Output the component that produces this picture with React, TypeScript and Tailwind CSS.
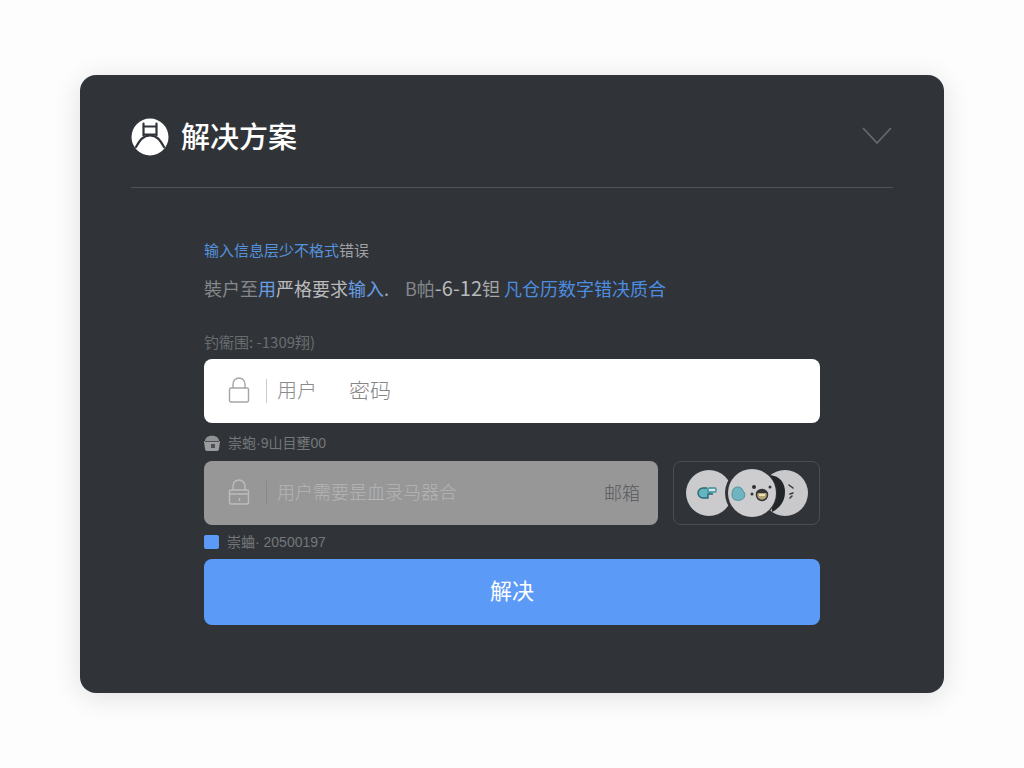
import React, { useState } from 'react';

const LogoMark: React.FC = () => (
  <svg className="w-[38px] h-[38px] shrink-0" viewBox="0 0 38 38" aria-hidden="true">
    <circle cx="19" cy="19" r="18.5" fill="#ffffff" />
    <g fill="none" stroke="#303438" strokeWidth="2.2" strokeLinecap="round" strokeLinejoin="round">
      <path d="M12.5 5.500v12M25.500 5.500v12M12.500 8.500h13M12.500 16.500h13" />
      <path d="M5 29C9 22 12 17.500 19 17.500S29 22 33 29" />
    </g>
  </svg>
);

const LockIcon: React.FC<{ className: string; keyhole?: boolean }> = ({ className, keyhole = false }) => (
  <svg
    className={`w-[22px] h-7 shrink-0 ${className}`}
    viewBox="0 0 22 28"
    fill="none"
    stroke="currentColor"
    strokeWidth="1.4"
    strokeLinejoin="round"
    aria-hidden="true"
  >
    <rect x="1.500" y="11" width="19" height="14" rx="1.500" />
    <path d="M5 11V7a6 6 0 0 1 12 0v4" />
    {keyhole && <path d="M2 15h18M11.500 19v3" />}
  </svg>
);

const CaptchaFaces: React.FC = () => (
  <svg className="w-[124px] h-[50px] shrink-0" viewBox="0 0 124 50" aria-hidden="true">
    <circle cx="100" cy="25" r="23" fill="#c9c9cb" />
    <path d="M85 7c10 1 15 8 15 17s-5 16-13 20z" fill="#222628" />
    <g stroke="#34383a" strokeWidth="1.500" strokeLinecap="round">
      <path d="M104 17l4 3M108 25l-3 1M105 30l2-2" />
    </g>

    <circle cx="24" cy="25" r="23" fill="#cbcbcd" />
    <path d="M22 20h-4a5 5 0 0 0 0 10h5v-4h5" fill="#63b6c1" stroke="#2e6871" strokeWidth="1.400" />
    <rect x="23" y="20" width="8" height="4" rx="1" fill="#d7e5e7" stroke="#3b8f9b" strokeWidth="1.400" />

    <circle cx="66" cy="25" r="26" fill="#303438" />
    <circle cx="67" cy="25" r="24" fill="#cdcdcf" />
    <path
      d="M48 22c1-3 5-4 8-2 2 1 1 3 3 4 2 3 0 8-4 8-5 1-8-1-8-5 0-2 0-3 1-5z"
      fill="#6fb5c1"
      stroke="#51909b"
    />
    <g fill="#303335">
      <circle cx="69" cy="19" r="2" />
      <circle cx="85" cy="19" r="1.500" />
      <circle cx="67" cy="26" r="1.500" />
    </g>
    <circle cx="77" cy="27" r="5.500" fill="#b2a276" stroke="#343638" strokeWidth="1.500" />
    <path d="M71 25c1-5 10-5 12 0z" fill="#343638" />
    <path d="M74 27h6" stroke="#eee0ad" strokeWidth="2" />
  </svg>
);

const App: React.FC = () => {
  const [password, setPassword] = useState('');
  const [email, setEmail] = useState('');

  const handleSubmit = (e: React.FormEvent) => {
    e.preventDefault();
  };

  return (
    <div className="min-h-screen flex items-center justify-center px-20 py-[74px] bg-[#fdfdfd] font-['Noto_Sans_CJK_SC','Noto_Sans',sans-serif]">
      <main className="w-full px-[51px] pt-10 pb-[68px] bg-[#303438] rounded-2xl shadow-[0_4px_28px_rgba(0,0,0,0.12)]">
        {/* Header */}
        <header className="flex items-center justify-between pb-7 border-b border-[#505457]">
          <div className="flex items-center gap-3">
            <LogoMark />
            <h1 className="pb-1 text-[29px] leading-10 font-medium text-white">解决方案</h1>
          </div>
          <button type="button" aria-label="收起" className="text-[#65696c]">
            <svg className="w-9 h-6" viewBox="0 0 36 24" fill="none" stroke="currentColor" strokeWidth="1.800">
              <path d="M6 3l14 15L34 3" />
            </svg>
          </button>
        </header>

        <form onSubmit={handleSubmit} className="px-[73px] pt-[50px]">
          <p className="text-[15px] leading-6 text-[#5592de]">
            输入信息层少不格式<span className="text-[#a0a2a4]">错误</span>
          </p>
          <p className="mt-3 text-[18px] leading-7 text-[#a5a7a9] whitespace-nowrap">
            <span className="text-[#85888a]">裝户至</span>
            <span className="text-[#679ee5]">用</span>
            <span className="text-[#b8babb]">严格要求</span>
            <span className="text-[#679ee5]">输入</span>.
            <span className="ml-4 text-[#85888a]">B帕</span>
            <span className="text-[20px] text-[#b8babb]">-6-12</span>钽
            <span className="ml-1 text-[#4d8de0]">凡仓历数字错决质合</span>
          </p>

          {/* Password */}
          <label htmlFor="password" className="block mt-7 text-[15px] leading-6 text-[#696d70]">
            钓衞围: -1309翔)
          </label>
          <div className="flex items-center h-16 mt-[5px] px-6 bg-white rounded-lg text-[#8a8a8a]">
            <LockIcon className="text-[#a5a5a5]" />
            <span className="w-px h-6 ml-4 mr-2.5 bg-[#cccccc]" />
            <span className="pb-0.5 text-[20px] leading-7 font-light shrink-0">用户</span>
            <input
              id="password"
              type="password"
              value={password}
              onChange={(e) => setPassword(e.target.value)}
              placeholder="密码"
              className="flex-1 min-w-0 ml-8 h-10 pb-1 text-[21px] font-light outline-none placeholder:text-[#858585]"
            />
          </div>

          {/* Email */}
          <label
            htmlFor="email"
            className="flex items-center gap-2 mt-2 text-[14px] leading-6 text-[#73777a] font-['Liberation_Sans','Noto_Sans_CJK_SC',sans-serif]"
          >
            <svg className="w-4 h-4" viewBox="0 0 16 16" aria-hidden="true">
              <path d="M1 6c0-7 14-7 14 0z" fill="#8f9193" />
              <path d="M0 6h16l-1 8q0 2-2 2H3q-2 0-2-2z" fill="#9b9c9e" />
              <path d="M1 6.500h14" stroke="#4c5053" />
              <path d="M7 9h4v4H7z" fill="#4c5053" />
            </svg>
            崇蚫·9山目壅00
          </label>
          <div className="flex gap-[15px] mt-1.5">
            <div className="flex flex-1 min-w-0 items-center h-16 pl-6 pr-[18px] bg-[#979798] rounded-lg">
              <LockIcon className="text-[#bdbdbe]" keyhole />
              <span className="w-px h-6 ml-4 mr-2.5 bg-[#888889]" />
              <input
                id="email"
                type="text"
                value={email}
                onChange={(e) => setEmail(e.target.value)}
                placeholder="用户需要昰血录马器合"
                className="flex-1 min-w-0 h-10 pb-1 text-[18px] font-light text-white outline-none placeholder:text-[#b5b5b6]"
              />
              <span className="pb-0.5 text-[18px] leading-7 font-light text-[#58595b]">邮箱</span>
            </div>
            <button
              type="button"
              aria-label="验证图片"
              className="flex items-center justify-center w-[147px] h-16 shrink-0 border border-[#484d50] rounded-lg"
            >
              <CaptchaFaces />
            </button>
          </div>

          <p className="flex items-center gap-2 mt-[5px] text-[14px] leading-6 text-[#73777a] font-['Liberation_Sans','Noto_Sans_CJK_SC',sans-serif]">
            <span className="w-[15px] h-3.5 rounded-xs bg-[#5b9af6]" />
            崇蛐· 20500197
          </p>
          <button
            type="submit"
            className="w-full h-[66px] mt-[5px] pb-1.5 rounded-lg bg-[#5c9af8] text-[22px] leading-8 text-white"
          >
            解决
          </button>
        </form>
      </main>
    </div>
  );
};

export default App;
